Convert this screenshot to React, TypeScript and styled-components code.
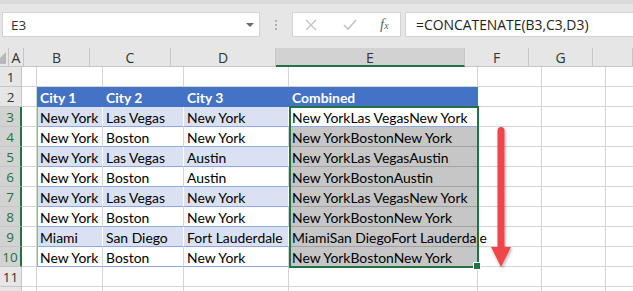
import React from 'react'
import styled, { createGlobalStyle } from 'styled-components'

const GlobalStyle = createGlobalStyle`
  html, body {
    margin: 0;
    padding: 0;
    background: #ffffff;
    overflow: hidden;
  }
`

const cols = [
  { key: '', w: 22 },
  { key: 'A', w: 15 },
  { key: 'B', w: 66 },
  { key: 'C', w: 81 },
  { key: 'D', w: 105 },
  { key: 'E', w: 189 },
  { key: 'F', w: 64 },
  { key: 'G', w: 64 },
  { key: '', w: 40 },
]

const data = [
  ['New York', 'Las Vegas', 'New York'],
  ['New York', 'Boston', 'New York'],
  ['New York', 'Las Vegas', 'Austin'],
  ['New York', 'Boston', 'Austin'],
  ['New York', 'Las Vegas', 'New York'],
  ['New York', 'Boston', 'New York'],
  ['Miami', 'San Diego', 'Fort Lauderdale'],
  ['New York', 'Boston', 'New York'],
]

type Kind = 'plain' | 'head' | 'band' | 'white' | 'sel' | 'active'

const App: React.FC = () => {
  const rows: { n: number; label: string; cells: { kind: Kind; text: string }[] }[] = []
  rows.push({ n: 1, label: '1', cells: [] })
  rows.push({
    n: 2,
    label: '2',
    cells: [
      { kind: 'head', text: 'City 1' },
      { kind: 'head', text: 'City 2' },
      { kind: 'head', text: 'City 3' },
      { kind: 'head', text: 'Combined' },
    ],
  })
  data.forEach((r, i) => {
    const kind: Kind = i % 2 === 0 ? 'band' : 'white'
    rows.push({
      n: i + 3,
      label: String(i + 3),
      cells: [
        { kind, text: r[0] },
        { kind, text: r[1] },
        { kind, text: r[2] },
        { kind: i === 0 ? 'active' : 'sel', text: r.join('') },
      ],
    })
  })
  rows.push({ n: 11, label: '11', cells: [] })
  // row 12 only peeks in at the bottom edge, its number is below the fold
  rows.push({ n: 12, label: '', cells: [] })

  return (
    <>
      <GlobalStyle />
      <Window>
        <TopBar>
          <NameBox>
            <span>E3</span>
            <DropArrow />
          </NameBox>
          <Dots>
            <i />
            <i />
            <i />
          </Dots>
          <FxButtons>
            <FxIcon>
              <svg width="14" height="14" viewBox="0 0 14 14">
                <path d="M2 2 L12 12 M12 2 L2 12" stroke="#c4c4c4" strokeWidth="1.4" fill="none" />
              </svg>
            </FxIcon>
            <FxIcon>
              <svg width="16" height="14" viewBox="0 0 16 14">
                <path d="M2 7 L6 11 L14 2" stroke="#c4c4c4" strokeWidth="1.6" fill="none" />
              </svg>
            </FxIcon>
            <FxLabel>
              f<sub>x</sub>
            </FxLabel>
          </FxButtons>
          <FormulaBox>=CONCATENATE(B3,C3,D3)</FormulaBox>
        </TopBar>

        <Sheet>
          <HeaderRow>
            {cols.map((c, i) =>
              i === 0 ? (
                <Corner key={i} $w={c.w}>
                  <CornerTri />
                </Corner>
              ) : (
                <ColHead key={i} $w={c.w} $sel={c.key === 'E'}>
                  {c.key}
                </ColHead>
              )
            )}
          </HeaderRow>

          {rows.map((r) => {
            const sel = r.n >= 3 && r.n <= 10
            return (
              <Row key={r.n}>
                <RowHead $sel={sel}>{r.label}</RowHead>
                <Cell $w={cols[1].w} $kind="plain" />
                {r.cells.length
                  ? r.cells.map((c, i) => (
                      <Cell key={i} $w={cols[i + 2].w} $kind={c.kind} $edge={i === 0}>
                        {c.text}
                      </Cell>
                    ))
                  : [2, 3, 4, 5].map((i) => <Cell key={i} $w={cols[i].w} $kind="plain" />)}
                <Cell $w={cols[6].w} $kind="plain" />
                <Cell $w={cols[7].w} $kind="plain" />
                <Cell $w={cols[8].w} $kind="plain" />
              </Row>
            )
          })}

          <Selection>
            <FillHandle />
          </Selection>

          <Arrow>
            <svg width="24" height="148" viewBox="0 0 24 148">
              <defs>
                <filter id="sh" x="-50%" y="-10%" width="200%" height="130%">
                  <feDropShadow dx="1" dy="2" stdDeviation="1.5" floodColor="#000" floodOpacity="0.3" />
                </filter>
              </defs>
              <g filter="url(#sh)">
                <rect x="8.5" y="2" width="7" height="124" rx="3.5" fill="#f2444a" />
                <path d="M2 122 L22 122 L12 142 Z" fill="#f2444a" />
              </g>
            </svg>
          </Arrow>
        </Sheet>
      </Window>
    </>
  )
}

export default App

const Window = styled.div`
  width: 633px;
  height: 291px;
  overflow: hidden;
  background: #ffffff;
  font-family: Lato, 'Liberation Sans', sans-serif;
`

const TopBar = styled.div`
  height: 48px;
  box-sizing: border-box;
  background: #e6e6e6;
  border-top: 4px solid #dadada;
  padding-top: 8px;
  display: flex;
  align-items: flex-start;
`

const NameBox = styled.div`
  margin-left: 2px;
  width: 258px;
  height: 25px;
  box-sizing: border-box;
  background: #ffffff;
  border: 1px solid #d4d4d4;
  display: flex;
  align-items: center;
  justify-content: space-between;
  padding: 0 5px 0 8px;
  font-family: 'Open Sans', sans-serif;
  font-size: 13.5px;
  color: #333;
`

const DropArrow = styled.span`
  width: 0;
  height: 0;
  border-left: 4px solid transparent;
  border-right: 4px solid transparent;
  border-top: 4px solid #6a6a6a;
`

const Dots = styled.div`
  width: 32px;
  height: 25px;
  display: flex;
  flex-direction: column;
  align-items: center;
  justify-content: center;
  gap: 2px;

  i {
    width: 2px;
    height: 2px;
    background: #b0b0b0;
  }
`

const FxButtons = styled.div`
  width: 109px;
  height: 25px;
  box-sizing: border-box;
  background: #ffffff;
  border: 1px solid #d4d4d4;
  display: flex;
  align-items: center;
  padding-left: 11px;
`

const FxIcon = styled.span`
  width: 38px;
  display: flex;
  align-items: center;
`

const FxLabel = styled.span`
  font-family: 'Liberation Serif', serif;
  font-style: italic;
  font-size: 15px;
  color: #666;

  sub {
    font-size: 10px;
    vertical-align: 0;
  }
`

const FormulaBox = styled.div`
  margin-left: 4px;
  flex: 1;
  height: 25px;
  box-sizing: border-box;
  background: #ffffff;
  border: 1px solid #d4d4d4;
  border-right: none;
  padding-left: 10px;
  display: flex;
  align-items: center;
  font-family: 'Open Sans', sans-serif;
  font-size: 13.9px;
  color: #222;
`

const Sheet = styled.div`
  position: relative;
`

const HeaderRow = styled.div`
  display: flex;
  height: 19px;
`

const Corner = styled.div<{ $w: number }>`
  width: ${({ $w }) => $w}px;
  box-sizing: border-box;
  background: #e6e6e6;
  border-right: 1px solid #c6c6c6;
  border-bottom: 1px solid #c6c6c6;
  position: relative;
`

const CornerTri = styled.span`
  position: absolute;
  right: 2px;
  bottom: 2px;
  width: 0;
  height: 0;
  border-left: 12px solid transparent;
  border-bottom: 12px solid #b8b8b8;
`

const ColHead = styled.div<{ $w: number; $sel: boolean }>`
  width: ${({ $w }) => $w}px;
  flex-shrink: 0;
  box-sizing: border-box;
  background: ${({ $sel }) => ($sel ? '#d2d2d2' : '#e6e6e6')};
  border-right: 1px solid #c6c6c6;
  border-bottom: ${({ $sel }) => ($sel ? '2px solid #217346' : '1px solid #c6c6c6')};
  display: flex;
  align-items: center;
  justify-content: center;
  font-family: 'Open Sans', sans-serif;
  font-size: 14px;
  color: #333;
  padding-top: ${({ $sel }) => ($sel ? '1px' : '0')};
`

const Row = styled.div`
  display: flex;
  height: 20px;
`

const RowHead = styled.div<{ $sel: boolean }>`
  width: 22px;
  flex-shrink: 0;
  box-sizing: border-box;
  background: ${({ $sel }) => ($sel ? '#d2d2d2' : '#e6e6e6')};
  border-right: ${({ $sel }) => ($sel ? '2px solid #217346' : '1px solid #c6c6c6')};
  border-bottom: 1px solid #c6c6c6;
  display: flex;
  align-items: center;
  justify-content: center;
  font-family: 'Open Sans', sans-serif;
  font-size: 13.5px;
  color: ${({ $sel }) => ($sel ? '#217346' : '#333')};
`

const kindBg: Record<Kind, string> = {
  plain: '#ffffff',
  head: '#4472c4',
  band: '#d9e1f2',
  white: '#ffffff',
  sel: '#c6c6c6',
  active: '#ffffff',
}

const kindLine: Record<Kind, string> = {
  plain: '#d4d4d4',
  head: '#4472c4',
  band: '#8ea9db',
  white: '#8ea9db',
  sel: '#a2a2a2',
  active: '#8ea9db',
}

const Cell = styled.div<{ $w: number; $kind: Kind; $edge?: boolean }>`
  width: ${({ $w }) => $w}px;
  flex-shrink: 0;
  box-sizing: border-box;
  position: relative;
  background: ${({ $kind }) => kindBg[$kind]};
  border-right: 1px solid
    ${({ $kind }) => ($kind === 'head' ? '#4472c4' : $kind === 'band' ? '#ffffff' : '#d4d4d4')};
  border-bottom: 1px solid ${({ $kind }) => kindLine[$kind]};
  box-shadow: ${({ $edge, $kind }) => ($edge && $kind !== 'head' ? 'inset 1px 0 0 #8ea9db' : 'none')};
  padding: 1px 0 0 3px;
  line-height: 19px;
  font-size: 13.9px;
  font-weight: ${({ $kind }) => ($kind === 'head' ? 700 : 400)};
  color: ${({ $kind }) => ($kind === 'head' ? '#ffffff' : '#000000')};
  white-space: nowrap;
  overflow: visible;
  z-index: ${({ $kind }) => ($kind === 'sel' || $kind === 'active' ? 1 : 0)};
`

const Selection = styled.div`
  position: absolute;
  left: 289px;
  top: 58px;
  width: 190px;
  height: 162px;
  box-sizing: border-box;
  border: 2px solid #217346;
  z-index: 2;
  pointer-events: none;
`

const FillHandle = styled.span`
  position: absolute;
  right: -4px;
  bottom: -4px;
  width: 6px;
  height: 6px;
  background: #217346;
  border: 1px solid #ffffff;
`

const Arrow = styled.div`
  position: absolute;
  left: 489px;
  top: 77px;
  z-index: 3;
`
